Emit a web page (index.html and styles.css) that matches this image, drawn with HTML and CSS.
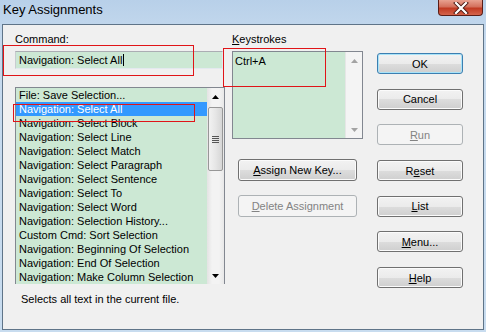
FILE: index.html
```html
<!DOCTYPE html>
<html lang="en">
<head>
<meta charset="UTF-8">
<title>Key Assignments</title>
<link rel="stylesheet" href="styles.css">
</head>
<body>
<div class="window">
    <div class="titlebar">
        <span class="title">Key Assignments</span>
        <span class="close-btn">
            <svg width="16" height="12" viewBox="0 0 16 12">
                <path d="M3 1 L13 11 M13 1 L3 11" stroke="#4a1a14" stroke-width="4" stroke-linecap="square"/>
                <path d="M3 1 L13 11 M13 1 L3 11" stroke="#ffffff" stroke-width="2.2" stroke-linecap="square"/>
            </svg>
        </span>
    </div>

    <div class="client">
        <div class="col col-command">
            <div class="label">Command:</div>
            <div class="edit">Navigation: Select All<span class="caret"></span></div>
            <div class="listbox">
                <ul class="items">
                    <li>File: Save Selection...</li>
                    <li class="selected">Navigation: Select All</li>
                    <li>Navigation: Select Block</li>
                    <li>Navigation: Select Line</li>
                    <li>Navigation: Select Match</li>
                    <li>Navigation: Select Paragraph</li>
                    <li>Navigation: Select Sentence</li>
                    <li>Navigation: Select To</li>
                    <li>Navigation: Select Word</li>
                    <li>Navigation: Selection History...</li>
                    <li>Custom Cmd: Sort Selection</li>
                    <li>Navigation: Beginning Of Selection</li>
                    <li>Navigation: End Of Selection</li>
                    <li>Navigation: Make Column Selection</li>
                </ul>
                <div class="vscroll">
                    <div class="arrow"><svg width="7" height="4" viewBox="0 0 7 4"><path d="M0 4 L3.5 0 L7 4 Z" fill="#000"/></svg></div>
                    <div class="track">
                        <div class="thumb"><span class="grip"></span></div>
                    </div>
                    <div class="arrow"><svg width="7" height="4" viewBox="0 0 7 4"><path d="M0 0 L3.5 4 L7 0 Z" fill="#000"/></svg></div>
                </div>
            </div>
            <div class="desc">Selects all text in the current file.</div>
        </div>

        <div class="col col-keys">
            <div class="label"><u>K</u>eystrokes</div>
            <div class="keybox">
                <div class="keys">Ctrl+A</div>
                <div class="vscroll">
                    <div class="arrow"><svg width="7" height="4" viewBox="0 0 7 4"><path d="M0 4 L3.5 0 L7 4 Z" fill="#a3a3a3"/></svg></div>
                    <div class="track"></div>
                    <div class="arrow"><svg width="7" height="4" viewBox="0 0 7 4"><path d="M0 0 L3.5 4 L7 0 Z" fill="#a3a3a3"/></svg></div>
                </div>
            </div>
            <button class="btn btn-wide btn-assign"><u>A</u>ssign New Key...</button>
            <button class="btn btn-wide btn-delete" disabled><u>D</u>elete Assignment</button>
        </div>

        <div class="col col-buttons">
            <button class="btn btn-default">OK</button>
            <button class="btn">Cancel</button>
            <button class="btn" disabled><u>R</u>un</button>
            <button class="btn">R<u>e</u>set</button>
            <button class="btn"><u>L</u>ist</button>
            <button class="btn"><u>M</u>enu...</button>
            <button class="btn"><u>H</u>elp</button>
        </div>
    </div>

    <!-- red annotation boxes drawn over the dialog -->
    <div class="mark mark-command"></div>
    <div class="mark mark-keys"></div>
    <div class="mark mark-row"></div>
</div>
</body>
</html>
```

FILE: styles.css
```css
/* Window frame */
body {
    margin: 0;
    background-color: #c0d6ec;
}

.window {
    position: relative;
    width: 486px;
    height: 332px;
    box-sizing: border-box;
    padding: 0 2px 2px 2px;
    background: linear-gradient(#b8d0e9, #c6daee 40px, #c8dcef);
    font-family: "Liberation Sans", Arial, sans-serif;
    font-size: 11px;
    color: #000;
}

.titlebar {
    height: 24px;
    display: flex;
    justify-content: space-between;
    align-items: flex-start;
}

.title {
    font-size: 13px;
    line-height: 20px;
    padding-left: 1px;
    color: #000;
}

.close-btn {
    width: 45px;
    height: 16px;
    margin-right: 1px;
    box-sizing: border-box;
    border: 1px solid #5b1d16;
    border-top: none;
    border-radius: 0 0 4px 4px;
    background: linear-gradient(#e8a190, #d4705c 45%, #c13a22 55%, #d4644c);
    display: flex;
    justify-content: center;
    align-items: center;
}

/* Client area */
.client {
    height: 306px;
    box-sizing: border-box;
    border: 1px solid #5f7488;
    background-color: #f0f0f0;
    padding: 7px 0 0 12px;
    display: flex;
}

.label {
    line-height: 14px;
    height: 14px;
}

.col-command {
    width: 210px;
}

.col-keys {
    width: 131px;
    margin-left: 7px;
}

.col-buttons {
    width: 86px;
    margin-left: 14px;
    padding-top: 21px;
    display: flex;
    flex-direction: column;
    gap: 14.7px;
}

/* Command edit */
.edit {
    margin-top: 5px;
    width: 208px;
    height: 18px;
    box-sizing: border-box;
    padding: 1px 0 0 3px;
    line-height: 14px;
    background-color: #cce8d4;
    border: 1px solid #e3e9ef;
    border-top-color: #abadb3;
    border-left-color: #c8ccd0;
    white-space: nowrap;
}

.caret {
    display: inline-block;
    width: 0;
    height: 12px;
    border-left: 1px solid #000;
    vertical-align: -2px;
    margin-left: 1px;
}

/* Command list */
.listbox {
    margin-top: 18px;
    height: 197px;
    box-sizing: border-box;
    border: 1px solid #828790;
    border-bottom: none;
    background-color: #cce8d4;
    display: flex;
    overflow: hidden;
}

.items {
    list-style: none;
    margin: 0;
    padding: 0;
    flex: 1;
}

.items li {
    height: 14px;
    line-height: 14px;
    padding-left: 3px;
    white-space: nowrap;
}

.items li.selected {
    background-color: #3399ff;
    color: #fff;
}

.vscroll {
    width: 17px;
    display: flex;
    flex-direction: column;
    background: linear-gradient(90deg, #e3e3e3, #f3f3f3 30%, #f3f3f3 70%, #e8e8e8);
}

.arrow {
    height: 17px;
    display: flex;
    justify-content: center;
    align-items: center;
    flex-shrink: 0;
}

.track {
    flex: 1;
}

.thumb {
    margin: 2px 1px 0 1px;
    height: 64px;
    box-sizing: border-box;
    border: 1px solid #979797;
    border-radius: 2px;
    background: linear-gradient(90deg, #f2f2f2, #e6e6e6 50%, #d6d6d6);
    display: flex;
    justify-content: center;
    align-items: center;
}

.grip {
    width: 7px;
    height: 7px;
    background: repeating-linear-gradient(#555 0, #555 1px, transparent 1px, transparent 2px);
}

.desc {
    margin-top: 8px;
    line-height: 14px;
    padding-left: 6px;
}

/* Keystrokes */
.keybox {
    margin-top: 5px;
    height: 88px;
    box-sizing: border-box;
    border: 1px solid #828790;
    background-color: #cce8d4;
    display: flex;
}

.keys {
    flex: 1;
    padding: 2px 0 0 2px;
    line-height: 14px;
}

.keybox .vscroll {
    width: 16px;
    background: #f4f4f4;
    border-left: 1px solid #e6e6e6;
}

/* Buttons */
.btn {
    display: block;
    width: 86px;
    height: 21px;
    padding: 0;
    box-sizing: border-box;
    border: 1px solid #707070;
    border-radius: 3px;
    background: linear-gradient(#f2f2f2, #ebebeb 50%, #dddddd 50%, #cfcfcf);
    box-shadow: inset 0 0 0 1px #fbfbfb;
    font-family: "Liberation Sans", Arial, sans-serif;
    font-size: 11px;
    line-height: 18px;
    color: #000;
}

.btn-default {
    border-color: #3c7fb1;
    box-shadow: inset 0 0 0 1px #a9e3f8;
}

.btn:disabled {
    border-color: #adb2b5;
    background: #f4f4f4;
    box-shadow: none;
    color: #838383;
}

.btn-wide {
    width: 119px;
    height: 22px;
    margin-left: 6px;
}

.btn-assign {
    margin-top: 20px;
}

.btn-delete {
    margin-top: 14px;
}

/* Red annotation rectangles */
.mark {
    position: absolute;
    border: 1px solid #e01418;
}

.mark-command {
    left: 3px;
    top: 45px;
    width: 189px;
    height: 29px;
}

.mark-keys {
    left: 223px;
    top: 48px;
    width: 101px;
    height: 37px;
}

.mark-row {
    left: 13px;
    top: 104px;
    width: 180px;
    height: 16px;
}
```
